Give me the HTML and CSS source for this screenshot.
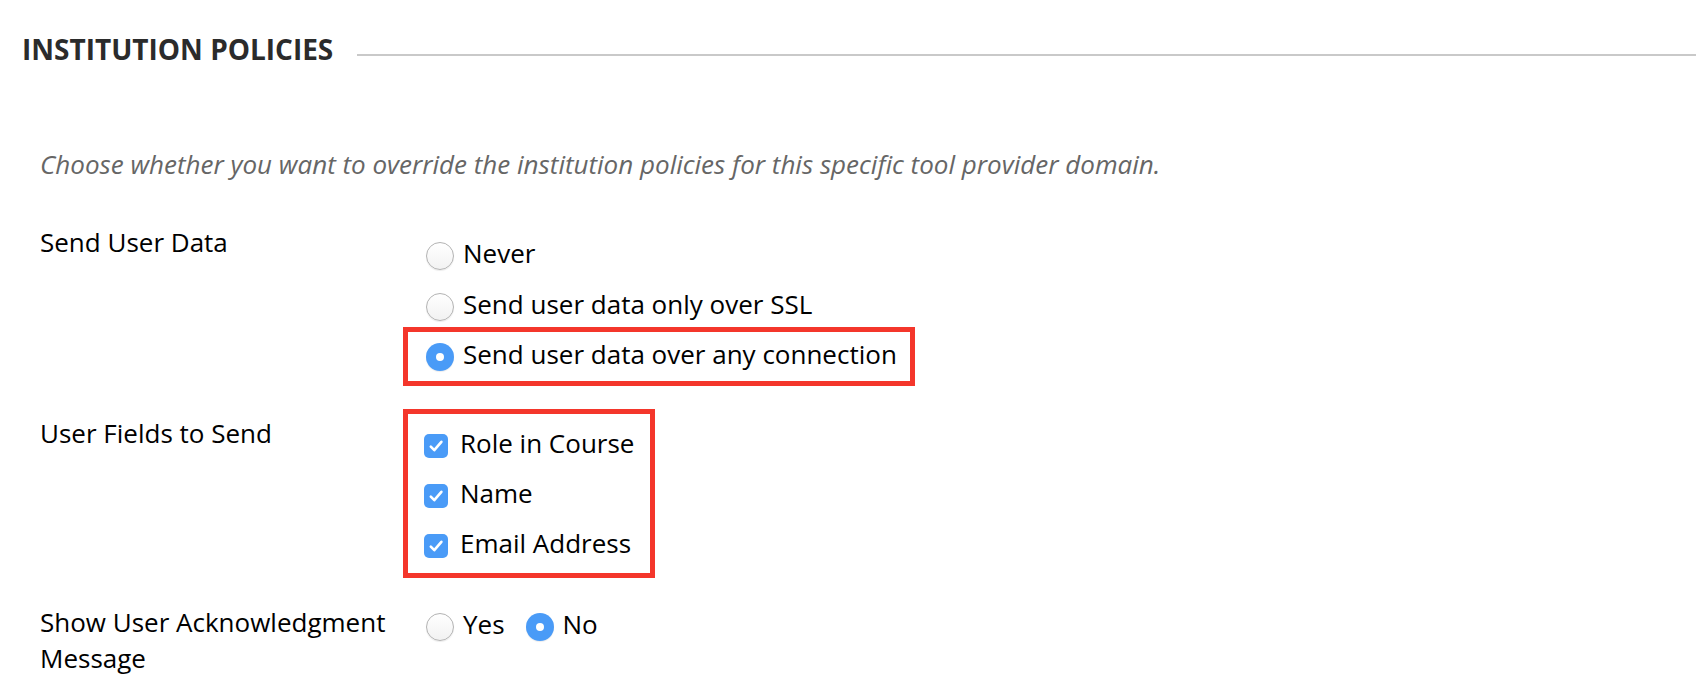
FILE: index.html
```html
<!DOCTYPE html>
<html lang="en">
<head>
<meta charset="utf-8">
<title>Institution Policies</title>
<link rel="stylesheet" href="styles.css">
</head>
<body>
<div class="page">
  <div class="section-header">
    <h2 class="section-title">INSTITUTION POLICIES</h2>
    <div class="section-rule"></div>
  </div>

  <p class="instructions">Choose whether you want to override the institution policies for this specific tool provider domain.</p>

  <div class="form-row row-send">
    <div class="field-label">Send User Data</div>
    <div class="field-options">
      <div class="opt opt-radio first"><span class="radio"></span><span class="opt-text">Never</span></div>
      <div class="opt opt-radio second"><span class="radio"></span><span class="opt-text">Send user data only over SSL</span></div>
      <div class="highlight box-send">
        <div class="opt opt-radio"><span class="radio checked"></span><span class="opt-text">Send user data over any connection</span></div>
      </div>
    </div>
  </div>

  <div class="form-row row-fields">
    <div class="field-label">User Fields to Send</div>
    <div class="field-options">
      <div class="highlight box-fields">
        <div class="opt opt-check"><span class="checkbox"><svg viewBox="0 0 24 24" width="24" height="24"><path d="M6.8 12.6 L10.3 16.2 L17.4 7.8" fill="none" stroke="#fff" stroke-width="2.6" stroke-linecap="round" stroke-linejoin="round"/></svg></span><span class="opt-text">Role in Course</span></div>
        <div class="opt opt-check"><span class="checkbox"><svg viewBox="0 0 24 24" width="24" height="24"><path d="M6.8 12.6 L10.3 16.2 L17.4 7.8" fill="none" stroke="#fff" stroke-width="2.6" stroke-linecap="round" stroke-linejoin="round"/></svg></span><span class="opt-text">Name</span></div>
        <div class="opt opt-check"><span class="checkbox"><svg viewBox="0 0 24 24" width="24" height="24"><path d="M6.8 12.6 L10.3 16.2 L17.4 7.8" fill="none" stroke="#fff" stroke-width="2.6" stroke-linecap="round" stroke-linejoin="round"/></svg></span><span class="opt-text">Email Address</span></div>
      </div>
    </div>
  </div>

  <div class="form-row row-ack">
    <div class="field-label">Show User Acknowledgment Message</div>
    <div class="field-options inline-options">
      <div class="opt opt-radio"><span class="radio"></span><span class="opt-text">Yes</span></div>
      <div class="opt opt-radio"><span class="radio checked"></span><span class="opt-text">No</span></div>
    </div>
  </div>
</div>
</body>
</html>
```

FILE: styles.css
```css
html, body {
  margin: 0;
  padding: 0;
  background: #ffffff;
}

body {
  font-family: "Open Sans", "Liberation Sans", sans-serif;
  color: #000;
}

.page {
  padding-top: 30px;
}

.section-header {
  display: flex;
  align-items: center;
  padding-left: 22px;
}

.section-title {
  margin: 0;
  font-size: 28px;
  line-height: 38px;
  font-weight: 700;
  color: #2b2b2b;
  white-space: nowrap;
}

.section-rule {
  flex: 1;
  height: 2px;
  background: #c9c9c9;
  margin-left: 24px;
  margin-top: 12px;
}

.instructions {
  margin: 80px 0 0 40px;
  font-size: 26px;
  line-height: 32px;
  font-style: italic;
  color: #666;
}

.form-row {
  display: grid;
  grid-template-columns: 363px auto;
  align-items: start;
  margin-left: 40px;
}

.row-send {
  margin-top: 44px;
}

.row-fields {
  margin-top: 23px;
}

.row-ack {
  margin-top: 26px;
}

.field-label {
  font-size: 26px;
  line-height: 36px;
  color: #000;
  padding-right: 16px;
}

.row-fields .field-label {
  margin-top: 6px;
}

.field-options {
  display: flex;
  flex-direction: column;
  align-items: flex-start;
}

.row-send .field-options {
  margin-top: 12px;
}

.row-ack .field-options {
  margin-top: 3px;
}

.inline-options {
  flex-direction: row;
}

.opt {
  display: flex;
  align-items: center;
  height: 40px;
  font-size: 26px;
  line-height: 36px;
  white-space: nowrap;
}

.opt-text {
  margin-bottom: 6px;
}

.opt-radio .radio {
  margin-right: 9px;
}

.field-options > .opt {
  margin-left: 23px;
}

.opt.second {
  margin-top: 11px;
}

.inline-options > .opt + .opt {
  margin-left: 21px;
}

.radio {
  width: 28px;
  height: 28px;
  box-sizing: border-box;
  border-radius: 50%;
  border: 1px solid #b3b3b3;
  background: linear-gradient(#ffffff, #f2f2f2);
  box-shadow: 0 1px 1px rgba(0, 0, 0, 0.08);
  flex: none;
  position: relative;
}

.radio.checked {
  border: none;
  background: #4a9bf7;
}

.radio.checked::after {
  content: "";
  position: absolute;
  left: 10px;
  top: 10px;
  width: 8px;
  height: 8px;
  border-radius: 50%;
  background: #fff;
}

.highlight {
  border: 5px solid #f4362b;
}

.box-send {
  padding: 5px 13px 4px 18px;
}

.box-fields {
  padding: 7px 16px 2px 16px;
}

.opt-check {
  height: 50px;
}

.checkbox {
  width: 24px;
  height: 24px;
  border-radius: 5px;
  background: #4a9bf7;
  margin-right: 12px;
  flex: none;
  display: flex;
}

.checkbox svg {
  display: block;
}
```
